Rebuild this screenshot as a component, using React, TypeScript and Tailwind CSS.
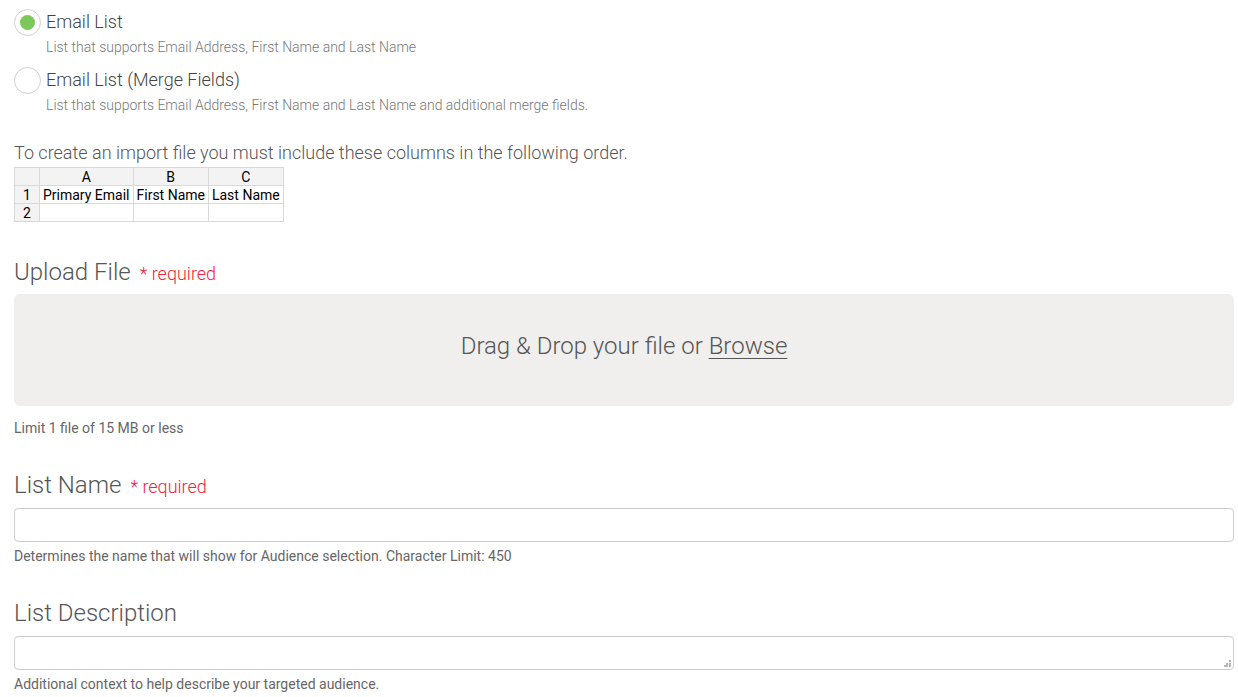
import React from "react"

function Radio({ checked }: { checked?: boolean }) {
  return (
    <span className="flex h-[27px] w-[27px] shrink-0 items-center justify-center rounded-full border border-[#cfcfcf] bg-white">
      {checked && <span className="h-[15px] w-[15px] rounded-full bg-[#7cc85a]" />}
    </span>
  )
}

function RadioOption({ title, desc, checked }: { title: string; desc: string; checked?: boolean }) {
  return (
    <div className="flex gap-[5px]">
      <Radio checked={checked} />
      <div className="flex flex-col">
        <span className="text-[18px] font-light leading-[26px] text-[#444]">{title}</span>
        <span className="mt-[2px] text-[14px] font-light leading-[20px] text-[#777]">{desc}</span>
      </div>
    </div>
  )
}

function Required() {
  return <span className="ml-[9px] text-[18px] font-light text-[#f5203a]">* required</span>
}

export default function App() {
  const cell = "border border-[#d9d9d9] px-[3px] h-[18px] leading-[16px] whitespace-nowrap"
  return (
    <div className="min-h-screen bg-white pl-[14px] pr-[4px] pt-[9px] font-['Roboto',sans-serif]">
      <div className="flex flex-col gap-[10px]">
        <RadioOption checked title="Email List" desc="List that supports Email Address, First Name and Last Name" />
        <RadioOption
          title="Email List (Merge Fields)"
          desc="List that supports Email Address, First Name and Last Name and additional merge fields."
        />
      </div>

      <p className="mt-[26px] text-[18px] font-light leading-[24px] text-[#555]">
        To create an import file you must include these columns in the following order.
      </p>
      <table className="mt-[2px] border-collapse text-[14px] text-black">
        <tbody>
          <tr className="bg-[#f3f3f3] text-center">
            <td className={`${cell} w-[25px]`}></td>
            <td className={cell}>A</td>
            <td className={cell}>B</td>
            <td className={cell}>C</td>
          </tr>
          <tr>
            <td className={`${cell} bg-[#f3f3f3] text-center`}>1</td>
            <td className={`${cell} bg-white`}>Primary Email</td>
            <td className={`${cell} bg-white`}>First Name</td>
            <td className={`${cell} bg-white`}>Last Name</td>
          </tr>
          <tr>
            <td className={`${cell} bg-[#f3f3f3] text-center`}>2</td>
            <td className={`${cell} bg-white`}></td>
            <td className={`${cell} bg-white`}></td>
            <td className={`${cell} bg-white`}></td>
          </tr>
        </tbody>
      </table>

      <div className="mt-[35px] flex items-baseline">
        <span className="text-[24px] font-light leading-[30px] text-[#555]">Upload File</span>
        <Required />
      </div>
      <div className="mt-[7px] flex h-[112px] items-center justify-center rounded-[6px] bg-[#f0efed] pb-[8px]">
        <span className="text-[24px] font-light text-[#555]">
          Drag &amp; Drop your file or{" "}
          <span className="underline decoration-1 underline-offset-[4px]">Browse</span>
        </span>
      </div>
      <p className="mt-[12px] text-[14px] leading-[20px] text-[#666]">Limit 1 file of 15 MB or less</p>

      <div className="mt-[32px] flex items-baseline">
        <span className="text-[24px] font-light leading-[30px] text-[#555]">List Name</span>
        <Required />
      </div>
      <input
        type="text"
        className="mt-[8px] block h-[34px] w-full rounded-[4px] border border-[#cccccc] bg-white px-3 outline-none"
      />
      <p className="mt-[4px] text-[14px] leading-[20px] text-[#666]">
        Determines the name that will show for Audience selection. Character Limit: 450
      </p>

      <div className="mt-[32px] flex items-baseline">
        <span className="text-[24px] font-light leading-[30px] text-[#555]">List Description</span>
      </div>
      <div className="relative mt-[8px]">
        <textarea
          rows={1}
          className="block h-[34px] w-full resize-none rounded-[4px] border border-[#cccccc] bg-white px-3 outline-none"
        />
        <svg className="absolute bottom-[3px] right-[3px]" width="7" height="7" viewBox="0 0 7 7" fill="#b5b5b5">
          <rect x="5" y="0" width="2" height="2" />
          <rect x="2" y="3" width="2" height="2" />
          <rect x="5" y="3" width="2" height="2" />
          <rect x="0" y="5" width="2" height="2" />
          <rect x="2" y="5" width="2" height="2" />
          <rect x="5" y="5" width="2" height="2" />
        </svg>
      </div>
      <p className="mt-[4px] text-[14px] leading-[20px] text-[#666]">Additional context to help describe your targeted audience.</p>
    </div>
  )
}
